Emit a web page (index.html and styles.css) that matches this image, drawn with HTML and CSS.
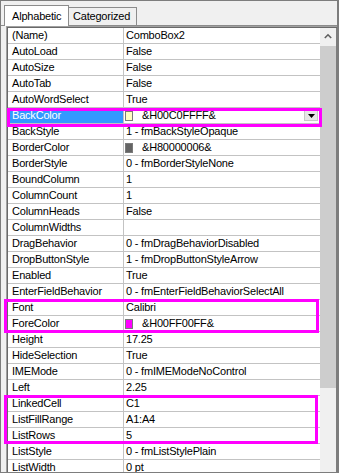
FILE: index.html
```html
<!DOCTYPE html>
<html>
<head>
	<meta charset="utf-8">
	<title>Properties</title>
	<link rel="stylesheet" href="styles.css">
</head>
<body>
	<div class="window">
		<div class="tabs">
			<div class="tab active">Alphabetic</div>
			<div class="tab">Categorized</div>
		</div>
		<div class="panel">
			<div class="grid">
				<div class="rows">
					<div class="row"><div class="name">(Name)</div><div class="value">ComboBox2</div></div>
					<div class="row"><div class="name">AutoLoad</div><div class="value">False</div></div>
					<div class="row"><div class="name">AutoSize</div><div class="value">False</div></div>
					<div class="row"><div class="name">AutoTab</div><div class="value">False</div></div>
					<div class="row"><div class="name">AutoWordSelect</div><div class="value">True</div></div>
					<div class="row selected">
						<div class="name">BackColor</div>
						<div class="value"><span class="swatch swatch-back"></span>&amp;H00C0FFFF&amp;<span class="drop"><svg width="7" height="4" viewBox="0 0 7 4"><path d="M0 0H7L3.5 4Z" fill="#000"/></svg></span></div>
					</div>
					<div class="row"><div class="name">BackStyle</div><div class="value">1 - fmBackStyleOpaque</div></div>
					<div class="row"><div class="name">BorderColor</div><div class="value"><span class="swatch swatch-border"></span>&amp;H80000006&amp;</div></div>
					<div class="row"><div class="name">BorderStyle</div><div class="value">0 - fmBorderStyleNone</div></div>
					<div class="row"><div class="name">BoundColumn</div><div class="value">1</div></div>
					<div class="row"><div class="name">ColumnCount</div><div class="value">1</div></div>
					<div class="row"><div class="name">ColumnHeads</div><div class="value">False</div></div>
					<div class="row"><div class="name">ColumnWidths</div><div class="value"></div></div>
					<div class="row"><div class="name">DragBehavior</div><div class="value">0 - fmDragBehaviorDisabled</div></div>
					<div class="row"><div class="name">DropButtonStyle</div><div class="value">1 - fmDropButtonStyleArrow</div></div>
					<div class="row"><div class="name">Enabled</div><div class="value">True</div></div>
					<div class="row"><div class="name">EnterFieldBehavior</div><div class="value">0 - fmEnterFieldBehaviorSelectAll</div></div>
					<div class="row"><div class="name">Font</div><div class="value">Calibri</div></div>
					<div class="row"><div class="name">ForeColor</div><div class="value"><span class="swatch swatch-fore"></span>&amp;H00FF00FF&amp;</div></div>
					<div class="row"><div class="name">Height</div><div class="value">17.25</div></div>
					<div class="row"><div class="name">HideSelection</div><div class="value">True</div></div>
					<div class="row"><div class="name">IMEMode</div><div class="value">0 - fmIMEModeNoControl</div></div>
					<div class="row"><div class="name">Left</div><div class="value">2.25</div></div>
					<div class="row"><div class="name">LinkedCell</div><div class="value">C1</div></div>
					<div class="row"><div class="name">ListFillRange</div><div class="value">A1:A4</div></div>
					<div class="row"><div class="name">ListRows</div><div class="value">5</div></div>
					<div class="row"><div class="name">ListStyle</div><div class="value">0 - fmListStylePlain</div></div>
					<div class="row"><div class="name">ListWidth</div><div class="value">0 pt</div></div>
				</div>
				<div class="scrollbar">
					<div class="arrow"><svg width="8" height="6" viewBox="0 0 8 6"><path d="M0.8 5L4 1.8L7.2 5" fill="none" stroke="#606060" stroke-width="1.6"/></svg></div>
					<div class="thumb"></div>
				</div>
			</div>
		</div>
		<div class="mark mark-back"></div>
		<div class="mark mark-font"></div>
		<div class="mark mark-list"></div>
	</div>
</body>
</html>
```

FILE: styles.css
```css
html, body {
	margin: 0;
	padding: 0;
	background: #f0f0f0;
}
.window {
	position: relative;
	width: 339px;
	height: 473px;
	box-sizing: border-box;
	border: 1px solid #7d7d7d;
	border-right-width: 2px;
	background: #f0f0f0;
	overflow: hidden;
	font-family: "Liberation Sans", Arial, sans-serif;
	font-size: 11px;
	letter-spacing: -0.2px;
	color: #000;
	display: flex;
	flex-direction: column;
}
.tabs {
	display: flex;
	align-items: flex-end;
	height: 24px;
	padding-left: 3px;
	border-bottom: 1px solid #8c8c8c;
	flex: none;
}
.tab {
	box-sizing: border-box;
	height: 18px;
	width: 68px;
	padding: 1px 0 0 4px;
	line-height: 14px;
	border: 1px solid #8c8c8c;
	border-bottom: none;
	border-left: none;
	background: #f0f0f0;
	cursor: default;
}
.tab.active {
	height: 21px;
	width: 65px;
	margin-bottom: -1px;
	padding: 3px 0 0 7px;
	border-left: 1px solid #8c8c8c;
	background: #fff;
}
.panel {
	flex: 1;
	display: flex;
	padding-left: 5px;
	min-height: 0;
}
.grid {
	flex: 1;
	display: flex;
	border-top: 1px solid #a0a0a0;
	border-left: 1px solid #a0a0a0;
	box-shadow: inset 1px 1px 0 #696969;
	padding: 1px 0 0 1px;
	min-height: 0;
	overflow: hidden;
}
.rows {
	width: 312px;
	background: #fff;
	overflow: hidden;
}
.row {
	display: flex;
	height: 15px;
	line-height: 15px;
	border-bottom: 1px solid #c3c3c3;
	white-space: nowrap;
}
.name {
	width: 111px;
	padding-left: 4px;
	border-right: 1px solid #c3c3c3;
	flex: none;
	overflow: hidden;
}
.value {
	flex: 1;
	display: flex;
	align-items: center;
	padding-left: 2px;
	overflow: hidden;
}
.row.selected .name {
	background: #3399ff;
	color: #fff;
}
.swatch {
	box-sizing: border-box;
	width: 8px;
	height: 10px;
	margin: 1px 9px 0 -1px;
	border: 1px solid #7a7a7a;
	flex: none;
}
.swatch-back { background: #ffffc0; }
.swatch-border { background: #646464; }
.swatch-fore { background: #ff00ff; }
.drop {
	margin-left: auto;
	margin-right: 2px;
	width: 14px;
	height: 11px;
	box-sizing: border-box;
	border: 1px solid #c8c8c8;
	background: #e6e6e6;
	display: flex;
	align-items: center;
	justify-content: center;
}
.drop svg {
	display: block;
}
.scrollbar {
	width: 16px;
	background: #f0f0f0;
	border-right: 1px solid #7d7d7d;
	flex: none;
}
.arrow {
	height: 17px;
	display: flex;
	align-items: center;
	justify-content: center;
}
.arrow svg {
	display: block;
	margin-top: -2px;
}
.thumb {
	margin-top: 1px;
	height: 342px;
	background: #cdcdcd;
}
.mark {
	position: absolute;
	box-sizing: border-box;
	border: 3px solid #ff00ff;
	pointer-events: none;
}
.mark-back {
	left: 6px;
	top: 107px;
	width: 315px;
	height: 19px;
}
.mark-font {
	left: 3px;
	top: 298px;
	width: 315px;
	height: 34px;
}
.mark-list {
	left: 3px;
	top: 394px;
	width: 314px;
	height: 49px;
}
```
